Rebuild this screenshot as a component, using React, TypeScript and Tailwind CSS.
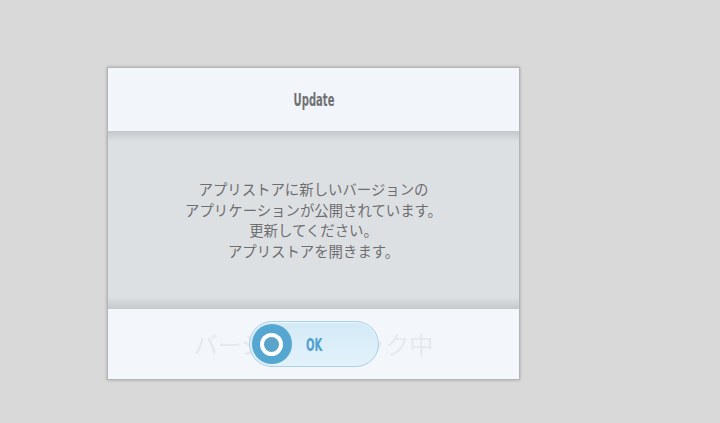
export default function App() {
  const lines = [
    "アプリストアに新しいバージョンの",
    "アプリケーションが公開されています。",
    "更新してください。",
    "アプリストアを開きます。",
  ];

  return (
    <div className="w-full h-[423px] bg-[#d9d9d9] pt-[67px] pl-[107px]">
      <div className="w-[413px] border border-[#b3b5b8] shadow-[0_0_3px_rgba(0,0,0,0.25)] bg-[#f2f5fa]">
        {/* header */}
        <div className="h-[63px] flex items-center justify-center bg-[#f2f5fa]">
          <span
            className="inline-block scale-x-[0.62] text-[18px] font-bold text-[#707073]"
            style={{ fontFamily: '"DejaVu Sans Condensed", "DejaVu Sans", sans-serif' }}
          >
            Update
          </span>
        </div>

        {/* body */}
        <div className="relative h-[178px] bg-[#dde0e3] flex flex-col items-center justify-center">
          <div className="absolute top-0 left-0 right-0 h-[10px] bg-gradient-to-b from-[#c3c6ca] to-[#dde0e3]" />
          <div className="absolute bottom-0 left-0 right-0 h-[12px] bg-gradient-to-b from-[#dde0e3] to-[#c6c9cc]" />
          <div
            className="relative text-center text-[14.4px] leading-[20.5px] text-[#6e6e70]"
            style={{ fontFamily: '"Noto Sans CJK JP", "Noto Sans", sans-serif' }}
          >
            {lines.map((l) => (
              <div key={l}>{l}</div>
            ))}
          </div>
        </div>

        {/* footer */}
        <div className="relative h-[70px] flex items-center justify-center bg-[#f3f6fa]">
          <span
            className="text-[24px] text-[#e6e9ed]"
            style={{ fontFamily: '"Noto Sans CJK JP", sans-serif' }}
          >
            バージョンチェック中
          </span>
          <button className="absolute left-1/2 top-[12px] -translate-x-1/2 w-[130px] h-[46px] rounded-full border border-[#a9d0e6] bg-gradient-to-b from-[#d3eaf7] to-[#e3f2fb] shadow-[inset_0_1px_0_rgba(255,255,255,0.6)] flex items-center pl-[2px]">
            <span className="w-[40px] h-[40px] rounded-full bg-[#55a7d2] flex items-center justify-center">
              <span className="w-[23px] h-[23px] rounded-full bg-white flex items-center justify-center">
                <span className="w-[15px] h-[15px] rounded-full bg-[#5aa4cc]" />
              </span>
            </span>
            <span
              className="ml-[9px] inline-block scale-x-[0.62] text-[18px] font-semibold text-[#4f9fcf]"
              style={{ fontFamily: '"DejaVu Sans Condensed", "DejaVu Sans", sans-serif' }}
            >
              OK
            </span>
          </button>
        </div>
      </div>
    </div>
  );
}
